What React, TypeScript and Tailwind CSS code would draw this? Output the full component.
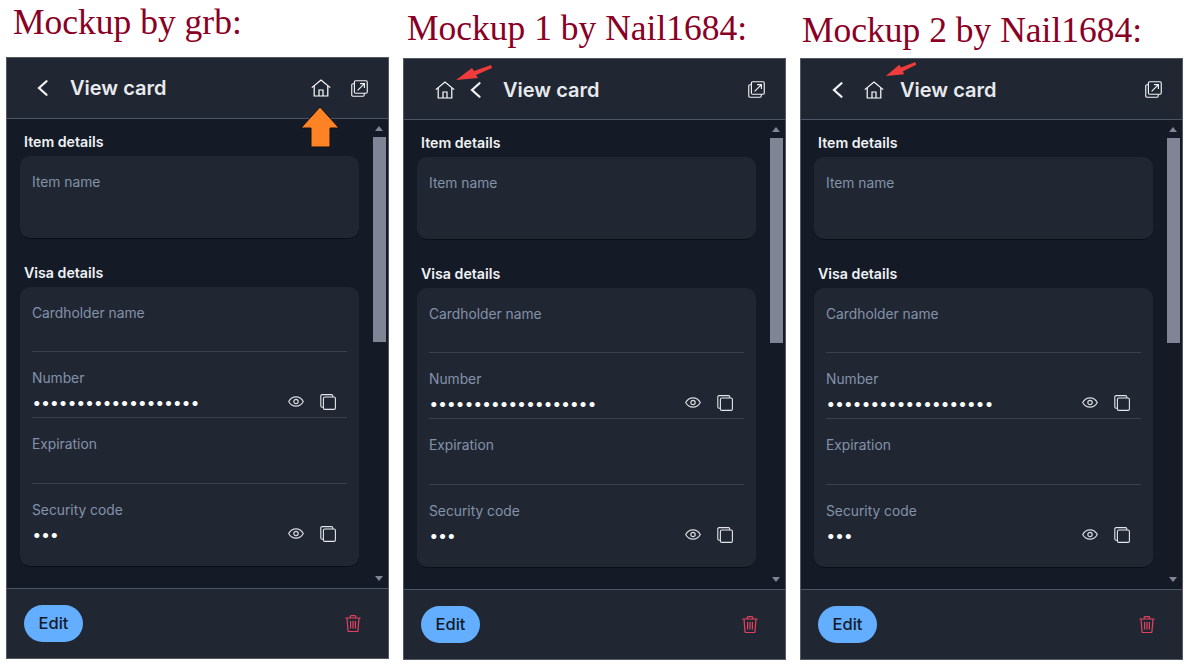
import type { ReactNode } from "react";

const HomeIcon = () => (
  <svg width="20" height="18" viewBox="0 0 20 18" fill="none" stroke="#fff" strokeWidth="1.2">
    <path d="M0.8 8.6 10 1l9.2 7.6" />
    <path d="M3.2 7v10h13.6V7" />
    <path d="M8 17v-6h4v6" />
  </svg>
);

const PopoutIcon = () => (
  <svg width="17" height="17" viewBox="0 0 18 18" fill="none" stroke="#f3f4f6" strokeWidth="1.2">
    <rect x="3.6" y="0.8" width="13.6" height="13.2" rx="1.2" />
    <path d="M3.6 4H2a1.2 1.2 0 0 0-1.2 1.2V16A1.2 1.2 0 0 0 2 17.2h10.8A1.2 1.2 0 0 0 14 16v-2" />
    <path d="M7 11l7-7M9.6 3.8h4.6v4.6" />
  </svg>
);

const ChevronIcon = () => (
  <svg width="11" height="16" viewBox="0 0 11 16" fill="none" stroke="#f3f4f6" strokeWidth="2.2" strokeLinecap="round">
    <path d="M9.5 1.2 2 8l7.5 6.8" />
  </svg>
);

const EyeIcon = () => (
  <svg width="16" height="11" viewBox="0 0 16 11" fill="none" stroke="#d8dbe0" strokeWidth="1.2">
    <path d="M0.7 5.5C2.4 2.4 5 0.8 8 0.8s5.6 1.6 7.3 4.7C13.6 8.6 11 10.2 8 10.2S2.4 8.6 0.7 5.5Z" />
    <circle cx="8" cy="5.5" r="2.2" />
  </svg>
);

const CopyIcon = () => (
  <svg width="16" height="16" viewBox="0 0 16 16" fill="none" stroke="#e5e7eb" strokeWidth="1.1">
    <rect x="3.4" y="3" width="12" height="12.4" rx="1.4" />
    <path d="M3.4 13.2H2.2A1.4 1.4 0 0 1 0.8 11.8V2A1.4 1.4 0 0 1 2.2 0.6h9.2A1.4 1.4 0 0 1 12.8 2v1" />
  </svg>
);

const TrashIcon = () => (
  <svg width="16" height="17" viewBox="0 0 16 17" fill="none" stroke="#e2415f" strokeWidth="1.2">
    <path d="M0.4 3h15.2M5.2 3V1.6a1 1 0 0 1 1-1h3.6a1 1 0 0 1 1 1V3" />
    <path d="M2 3l1 12.6a1 1 0 0 0 1 .9h8a1 1 0 0 0 1-.9L14 3" />
    <path d="M5.6 6v7.4M8 6v7.4M10.4 6v7.4" />
  </svg>
);

const OrangeArrow = () => (
  <svg width="40" height="42" viewBox="0 0 40 42" className="absolute left-[293px] top-[48px]">
    <path d="M20 1 39 22H30V41H11V22H1Z" fill="#ff8324" stroke="#111" strokeWidth="1" />
  </svg>
);

const RedArrow = ({ className }: { className: string }) => (
  <svg viewBox="0 0 38 18" preserveAspectRatio="none" className={className}>
    <path d="M1 16 17 4l2 3L36 1l1 3-16 7 2 3Z" fill="#ef3b3b" />
  </svg>
);

function Field({ label, value, actions = false }: { label: string; value?: string; actions?: boolean }) {
  return (
    <div className="flex h-[66px] flex-col border-b border-[#3a404c] first:h-[65px] last:border-b-0">
      <div className="pt-[17px] text-[13.8px] leading-[18px] text-[#8492a9]">{label}</div>
      <div className="mt-[5px] flex h-[20px] items-center justify-between pl-[1px] pr-[11px]">
        <span className="text-[16px] font-bold leading-[20px] tracking-[1.2px] text-white">{value}</span>
        {actions && (
          <div className="-mt-[1px] flex items-center gap-[16px]">
            <EyeIcon />
            <CopyIcon />
          </div>
        )}
      </div>
    </div>
  );
}

function Panel({ left, children }: { left: ReactNode; children?: ReactNode }) {
  return (
    <div className="relative flex h-[602px] w-[383px] flex-col overflow-hidden border border-[#555a62] bg-[#202733] font-['Inter',sans-serif]">
      {/* top bar */}
      <div className="flex h-[61px] shrink-0 items-center border-b border-[#4c5564] pr-[20px]">
        <div className="flex flex-1 items-center">{left}</div>
        <PopoutIcon />
      </div>

      {/* scrolling content */}
      <div className="flex min-h-0 flex-1 bg-[#141b27]">
        <div className="flex-1 pl-[13px] pr-[13px]">
          <h3 className="ml-[4px] mt-[14px] text-[14.2px] font-semibold leading-[18px] text-[#f0f2f5]">Item details</h3>
          <div className="mt-[5px] h-[83px] rounded-[10px] border-b border-[#0b0f16] bg-[#202733] px-[12px] pt-[17px]">
            <div className="text-[13.8px] leading-[18px] text-[#8492a9]">Item name</div>
          </div>
          <h3 className="ml-[4px] mt-[25px] text-[14.2px] font-semibold leading-[18px] text-[#f0f2f5]">Visa details</h3>
          <div className="mt-[5px] h-[280px] rounded-[10px] border-b border-[#0b0f16] bg-[#202733] px-[12px]">
            <Field label="Cardholder name" />
            <Field label="Number" value="•••••••••••••••••••" actions />
            <Field label="Expiration" />
            <Field label="Security code" value="•••" actions />
          </div>
        </div>
        {/* scrollbar */}
        <div className="flex w-[16px] flex-col items-center pr-[2px] pt-[7px]">
          <div className="h-0 w-0 border-x-[4px] border-b-[5px] border-x-transparent border-b-[#7f8594]" />
          <div className="mt-[6px] h-[205px] w-[13px] bg-[#7f8594]" />
          <div className="mb-[7px] mt-auto h-0 w-0 border-x-[4px] border-t-[5px] border-x-transparent border-t-[#7f8594]" />
        </div>
      </div>

      {/* footer */}
      <div className="flex h-[70px] shrink-0 items-center justify-between border-t border-[#4c5564] pl-[17px] pr-[27px]">
        <button className="h-[37px] w-[59px] rounded-full bg-[#63aeff] text-[16.5px] font-medium text-[#141b27]">Edit</button>
        <TrashIcon />
      </div>
      {children}
    </div>
  );
}

function Heading({ text, className }: { text: string; className: string }) {
  return (
    <div className={`whitespace-nowrap font-['Liberation_Serif',serif] text-[35.5px] leading-[40px] text-[#8a0025] ${className}`}>
      {text}
    </div>
  );
}

const Title = () => <span className="text-[20px] font-semibold leading-[28px] text-[#e8eaee]">View card</span>;

export default function App() {
  return (
    <div className="flex h-[666px] w-[1191px] gap-[14px] overflow-hidden bg-white pl-[6px]">
      <div>
        <Heading text="Mockup by grb:" className="ml-[7px] mt-[2px] h-[55px]" />
        <Panel
          left={
            <>
              <div className="ml-[30px]"><ChevronIcon /></div>
              <div className="ml-[22px]"><Title /></div>
              <div className="ml-auto mr-[20px]"><HomeIcon /></div>
            </>
          }
        >
          <OrangeArrow />
        </Panel>
      </div>
      <div>
        <Heading text="Mockup 1 by Nail1684:" className="ml-[4px] mt-[8px] h-[50px]" />
        <Panel
          left={
            <>
              <div className="ml-[31px] mt-[1px]"><HomeIcon /></div>
              <div className="ml-[15px] mt-[1px]"><ChevronIcon /></div>
              <div className="ml-[22px] mt-[1px]"><Title /></div>
            </>
          }
        >
          <RedArrow className="absolute left-[51px] top-[5px] h-[18px] w-[38px]" />
        </Panel>
      </div>
      <div>
        <Heading text="Mockup 2 by Nail1684:" className="ml-[2px] mt-[10px] h-[48px]" />
        <Panel
          left={
            <>
              <div className="ml-[31px] mt-[1px]"><ChevronIcon /></div>
              <div className="ml-[21px] mt-[1px]"><HomeIcon /></div>
              <div className="ml-[16px] mt-[1px]"><Title /></div>
            </>
          }
        >
          <RedArrow className="absolute left-[84px] top-[2px] h-[17px] w-[32px]" />
        </Panel>
      </div>
    </div>
  );
}
